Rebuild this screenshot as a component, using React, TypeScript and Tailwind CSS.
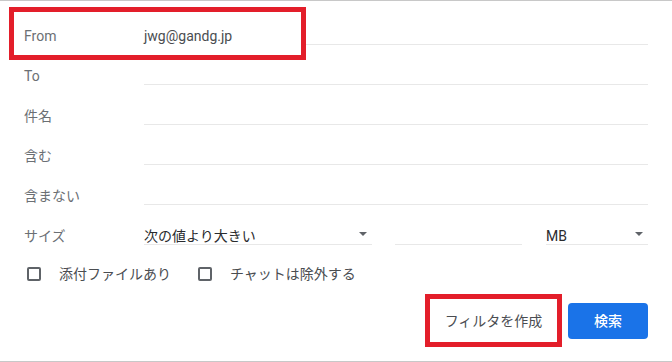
import React from "react";

const font = { fontFamily: 'Roboto, "Noto Sans CJK JP", sans-serif' };

function Caret() {
  return (
    <svg width="8" height="4" viewBox="0 0 8 4" className="shrink-0">
      <path d="M0 0 L8 0 L4 4 Z" fill="#5f6368" />
    </svg>
  );
}

function Row({ label, children }: { label: string; children?: React.ReactNode }) {
  return (
    <div className="flex h-[40px] items-end">
      <div className="h-[21px] w-[120px] shrink-0 pt-[2px] text-[14px] leading-[20px] text-[#6b6f74]">{label}</div>
      {children ?? <div className="h-[21px] flex-1 border-b border-[#e8e8e8]" />}
    </div>
  );
}

function Checkbox({ label }: { label: string }) {
  return (
    <div className="flex items-center">
      <div className="h-[14px] w-[14px] rounded-[2px] border-2 border-[#5f6368]" />
      <span className="ml-[18px] text-[14px] leading-[20px] text-[#4a4d51]">{label}</span>
    </div>
  );
}

export default function App() {
  return (
    <div
      className="relative h-[362px] w-[672px] overflow-hidden border-t border-b border-[#c8c8c8] bg-white pt-[4px] pl-[24px] pr-[24px]"
      style={font}
    >
      <Row label="From">
        <div className="flex h-[21px] flex-1">
          <div className="w-[162px] pt-[2px] text-[14px] leading-[20px] text-[#4a4d51]">jwg@gandg.jp</div>
          <div className="flex-1 border-b border-[#e8e8e8]" />
        </div>
      </Row>
      <Row label="To" />
      <Row label="件名" />
      <Row label="含む" />
      <Row label="含まない" />
      <Row label="サイズ">
        <div className="flex h-[21px] flex-1">
          <div className="flex w-[228px] items-center justify-between border-b border-[#e8e8e8] pr-[5px]">
            <span className="pt-[3px] text-[14px] leading-[20px] text-[#2a2b2e]">次の値より大きい</span>
            <Caret />
          </div>
          <div className="ml-[23px] w-[127px] border-b border-[#e8e8e8]" />
          <div className="ml-[24px] flex flex-1 items-center justify-between border-b border-[#e8e8e8] pr-[5px]">
            <span className="pt-[3px] text-[14px] leading-[20px] text-[#2a2b2e]">MB</span>
            <Caret />
          </div>
        </div>
      </Row>
      <div className="mt-[19px] flex h-[20px] items-center pl-[3px]">
        <Checkbox label="添付ファイルあり" />
        <div className="ml-[27px]">
          <Checkbox label="チャットは除外する" />
        </div>
      </div>
      <div className="mt-[10px] flex items-center justify-end">
        <button className="flex h-[53px] w-[137px] items-center justify-center border-[5px] border-[#e31e2a] bg-white text-[14px] leading-[20px] text-[#4a4d51]">
          フィルタを作成
        </button>
        <button className="ml-[6px] flex h-[36px] w-[80px] items-center justify-center rounded-[4px] bg-[#1a73e8] text-[14px] font-medium leading-[20px] text-white">
          検索
        </button>
      </div>
      <div className="pointer-events-none absolute left-[9px] top-[6px] h-[53px] w-[297px] border-[5px] border-[#e31e2a]" />
    </div>
  );
}
